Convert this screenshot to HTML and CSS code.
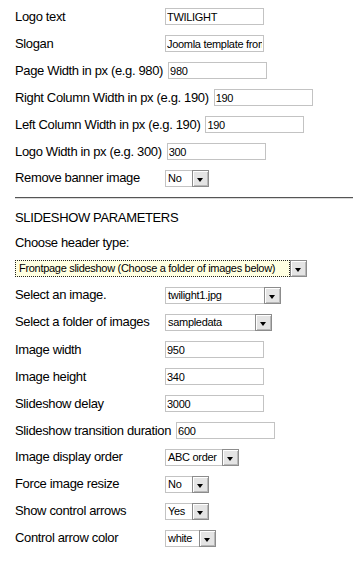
FILE: index.html
```html
<!DOCTYPE html>
<html lang="en">
<head>
  <meta charset="UTF-8">
  <meta name="viewport" content="width=device-width, initial-scale=1.0">
  <title>Template parameters</title>
  <link rel="stylesheet" href="styles.css">
</head>
<body>
<div class="params">
  <div class="row">
    <label class="param-label" for="logo-text">Logo text</label>
    <input class="text-input" type="text" id="logo-text" value="TWILIGHT">
  </div>
  <div class="row">
    <label class="param-label" for="slogan">Slogan</label>
    <input class="text-input" type="text" id="slogan" value="Joomla template from">
  </div>
  <div class="row">
    <label class="param-label" for="page-width">Page Width in px (e.g. 980)</label>
    <input class="text-input" type="text" id="page-width" value="980">
  </div>
  <div class="row">
    <label class="param-label" for="right-width">Right Column Width in px (e.g. 190)</label>
    <input class="text-input" type="text" id="right-width" value="190">
  </div>
  <div class="row">
    <label class="param-label" for="left-width">Left Column Width in px (e.g. 190)</label>
    <input class="text-input" type="text" id="left-width" value="190">
  </div>
  <div class="row">
    <label class="param-label" for="logo-width">Logo Width in px (e.g. 300)</label>
    <input class="text-input" type="text" id="logo-width" value="300">
  </div>
  <div class="row">
    <label class="param-label">Remove banner image</label>
    <span class="select select-yesno"><span class="select-value">No</span><span class="select-btn"></span></span>
  </div>

  <hr class="divider">

  <p class="section-title">SLIDESHOW PARAMETERS</p>
  <p class="section-note">Choose header type:</p>
  <div class="select select-wide">
    <span class="select-value">Frontpage slideshow (Choose a folder of images below)</span><span class="select-btn"></span>
  </div>

  <div class="slides">
    <div class="row">
      <label class="param-label">Select an image.</label>
      <span class="select select-image"><span class="select-value">twilight1.jpg</span><span class="select-btn"></span></span>
    </div>
    <div class="row">
      <label class="param-label">Select a folder of images</label>
      <span class="select select-folder"><span class="select-value">sampledata</span><span class="select-btn"></span></span>
    </div>
    <div class="row">
      <label class="param-label" for="img-width">Image width</label>
      <input class="text-input" type="text" id="img-width" value="950">
    </div>
    <div class="row">
      <label class="param-label" for="img-height">Image height</label>
      <input class="text-input" type="text" id="img-height" value="340">
    </div>
    <div class="row">
      <label class="param-label" for="delay">Slideshow delay</label>
      <input class="text-input" type="text" id="delay" value="3000">
    </div>
    <div class="row">
      <label class="param-label" for="duration">Slideshow transition duration</label>
      <input class="text-input" type="text" id="duration" value="600">
    </div>
    <div class="row">
      <label class="param-label">Image display order</label>
      <span class="select select-order"><span class="select-value">ABC order</span><span class="select-btn"></span></span>
    </div>
    <div class="row">
      <label class="param-label">Force image resize</label>
      <span class="select select-yesno"><span class="select-value">No</span><span class="select-btn"></span></span>
    </div>
    <div class="row">
      <label class="param-label">Show control arrows</label>
      <span class="select select-yesno"><span class="select-value">Yes</span><span class="select-btn"></span></span>
    </div>
    <div class="row">
      <label class="param-label">Control arrow color</label>
      <span class="select select-color"><span class="select-value">white</span><span class="select-btn"></span></span>
    </div>
  </div>
</div>
</body>
</html>
```

FILE: styles.css
```css
body {
  font-family: "Liberation Sans", Arial, sans-serif;
  background-color: #fff;
  color: #000;
  margin: 0;
  padding: 0;
}

.params {
  padding: 8px 0 0 15px;
}

.row {
  display: flex;
  align-items: baseline;
  height: 27px;
}

.param-label {
  min-width: 150px;
  padding-right: 5px;
  box-sizing: border-box;
  font-size: 13px;
  line-height: 15px;
  letter-spacing: -0.35px;
  white-space: nowrap;
}

.text-input {
  flex: none;
  width: 99px;
  height: 17px;
  box-sizing: border-box;
  margin: 0;
  padding: 0 1px;
  border: 1px solid #c3c3c3;
  font-family: "Liberation Sans", Arial, sans-serif;
  font-size: 11px;
  letter-spacing: -0.3px;
  color: #000;
  background: #fff;
}

/* fake drop-down, old windows look */
.select {
  flex: none;
  display: inline-flex;
  height: 17px;
  font-size: 11px;
  line-height: 15px;
  letter-spacing: -0.3px;
}

.select-value {
  flex: 1;
  padding: 0 2px;
  border: 1px solid #c3c3c3;
  border-right: none;
  white-space: nowrap;
  overflow: hidden;
}

.select-btn {
  position: relative;
  flex: none;
  width: 17px;
  box-sizing: border-box;
  border: 1px solid #8c8c8c;
  background: #e4e4e4;
  box-shadow: inset 1px 1px 0 #fff, inset -1px -1px 0 #b8b8b8;
}

.select-btn::after {
  content: "";
  position: absolute;
  left: 4px;
  top: 7px;
  border-top: 4px solid #000;
  border-left: 3.5px solid transparent;
  border-right: 3.5px solid transparent;
}

.select-yesno { width: 44px; }
.select-color { width: 51px; }
.select-order { width: 74px; }
.select-folder { width: 107px; }
.select-image { width: 116px; }

.select-wide {
  width: 292px;
  margin-top: 10px;
}

.select-wide .select-value {
  border: 1px dotted #222;
  background: #ffffe1;
  padding: 0 3px;
}

.divider {
  height: 0;
  margin: 0;
  border: none;
  border-top: 1px solid #555;
  border-bottom: 1px solid #d9d9d9;
}

.section-title,
.section-note {
  font-size: 13px;
  line-height: 15px;
  letter-spacing: -0.35px;
  margin: 11px 0 0;
}

.section-note {
  margin-top: 10px;
}

.slides {
  margin-top: 10px;
}
```
